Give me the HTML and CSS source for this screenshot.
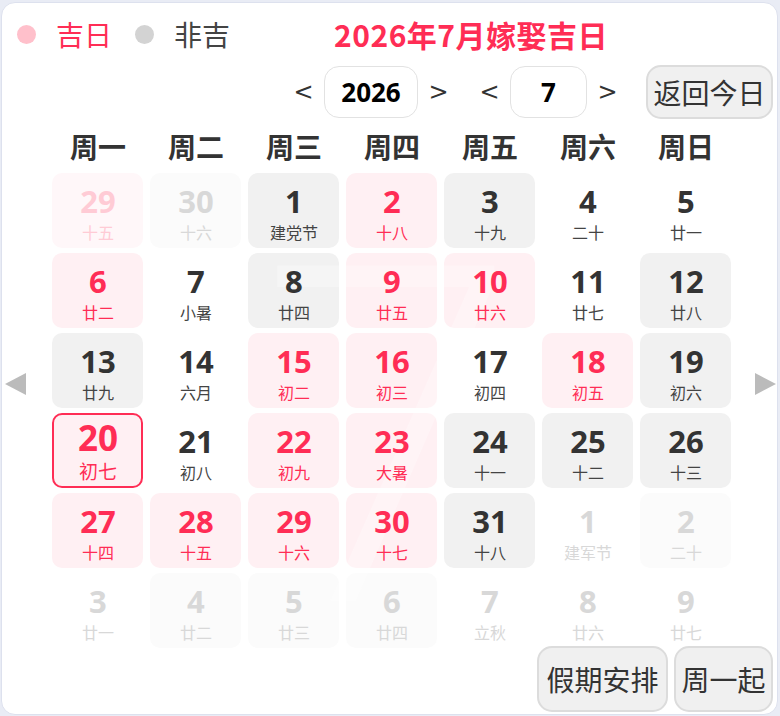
FILE: index.html
```html
<!DOCTYPE html>
<html lang="zh">
<head>
<meta charset="utf-8">
<title>2026年7月嫁娶吉日</title>
<link rel="stylesheet" href="styles.css">
</head>
<body>
<div class="card">
  <div class="top">
    <div class="legend">
      <span class="dot dot-good"></span><span class="lg-text good">吉日</span>
      <span class="dot dot-bad"></span><span class="lg-text bad">非吉</span>
    </div>
    <div class="title">2026年7月嫁娶吉日</div>
  </div>
  <div class="controls">
    <span class="chev">&lt;</span>
    <span class="box box-year">2026</span>
    <span class="chev">&gt;</span>
    <span class="chev chev-gap">&lt;</span>
    <span class="box box-month">7</span>
    <span class="chev">&gt;</span>
    <span class="btn btn-today">返回今日</span>
  </div>
  <div class="main">
    <div class="side"><span class="tri tri-left"></span></div>
    <div class="cal">
      <div class="week">
        <span>周一</span><span>周二</span><span>周三</span><span>周四</span><span>周五</span><span>周六</span><span>周日</span>
      </div>
      <div class="grid">
        <div class="cell pink faded"><b>29</b><i>十五</i></div>
        <div class="cell grey faded"><b>30</b><i>十六</i></div>
        <div class="cell grey"><b>1</b><i>建党节</i></div>
        <div class="cell pink"><b>2</b><i>十八</i></div>
        <div class="cell grey"><b>3</b><i>十九</i></div>
        <div class="cell"><b>4</b><i>二十</i></div>
        <div class="cell"><b>5</b><i>廿一</i></div>

        <div class="cell pink"><b>6</b><i>廿二</i></div>
        <div class="cell"><b>7</b><i>小暑</i></div>
        <div class="cell grey"><b>8</b><i>廿四</i></div>
        <div class="cell pink"><b>9</b><i>廿五</i></div>
        <div class="cell pink"><b>10</b><i>廿六</i></div>
        <div class="cell"><b>11</b><i>廿七</i></div>
        <div class="cell grey"><b>12</b><i>廿八</i></div>

        <div class="cell grey"><b>13</b><i>廿九</i></div>
        <div class="cell"><b>14</b><i>六月</i></div>
        <div class="cell pink"><b>15</b><i>初二</i></div>
        <div class="cell pink"><b>16</b><i>初三</i></div>
        <div class="cell"><b>17</b><i>初四</i></div>
        <div class="cell pink"><b>18</b><i>初五</i></div>
        <div class="cell grey"><b>19</b><i>初六</i></div>

        <div class="cell pink today"><b>20</b><i>初七</i></div>
        <div class="cell"><b>21</b><i>初八</i></div>
        <div class="cell pink"><b>22</b><i>初九</i></div>
        <div class="cell pink"><b>23</b><i>大暑</i></div>
        <div class="cell grey"><b>24</b><i>十一</i></div>
        <div class="cell grey"><b>25</b><i>十二</i></div>
        <div class="cell grey"><b>26</b><i>十三</i></div>

        <div class="cell pink"><b>27</b><i>十四</i></div>
        <div class="cell pink"><b>28</b><i>十五</i></div>
        <div class="cell pink"><b>29</b><i>十六</i></div>
        <div class="cell pink"><b>30</b><i>十七</i></div>
        <div class="cell grey"><b>31</b><i>十八</i></div>
        <div class="cell faded"><b>1</b><i>建军节</i></div>
        <div class="cell grey faded"><b>2</b><i>二十</i></div>

        <div class="cell faded"><b>3</b><i>廿一</i></div>
        <div class="cell grey faded"><b>4</b><i>廿二</i></div>
        <div class="cell grey faded"><b>5</b><i>廿三</i></div>
        <div class="cell grey faded"><b>6</b><i>廿四</i></div>
        <div class="cell faded"><b>7</b><i>立秋</i></div>
        <div class="cell faded"><b>8</b><i>廿六</i></div>
        <div class="cell faded"><b>9</b><i>廿七</i></div>
      </div>
    </div>
    <div class="side"><span class="tri tri-right"></span></div>
  </div>
  <div class="footer">
    <span class="btn btn-holiday">假期安排</span>
    <span class="btn btn-week">周一起</span>
  </div>
</div>
</body>
</html>
```

FILE: styles.css
```css
html, body {
  margin: 0;
  padding: 0;
}
body {
  background: #e9ecf5;
  font-family: "Noto Sans CJK SC", "Noto Sans", sans-serif;
  width: 780px;
  height: 716px;
  overflow: hidden;
}
.card {
  box-sizing: border-box;
  width: 777px;
  height: 713px;
  margin: 2px 0 0 1px;
  background: #fff;
  border: 1px solid #dde1ee;
  border-radius: 14px;
  position: relative;
  overflow: hidden;
}
.top {
  display: flex;
  align-items: center;
  height: 62px;
  padding-left: 15px;
}
.legend {
  display: flex;
  align-items: center;
}
.dot {
  width: 19px;
  height: 19px;
  border-radius: 50%;
  display: inline-block;
}
.dot-good { background: #ffc0cb; }
.dot-bad { background: #d3d3d3; margin-left: 23px; }
.lg-text {
  font-size: 28px;
  line-height: 40px;
  margin-left: 20px;
}
.good { color: #ff2d55; }
.bad { color: #444; }
.title {
  margin-left: 104px;
  font-size: 30px;
  font-weight: 700;
  letter-spacing: 0.5px;
  color: #ff2d55;
  line-height: 40px;
}
.controls {
  display: flex;
  justify-content: flex-end;
  align-items: center;
  height: 54px;
  padding-right: 4px;
}
.chev {
  font-family: "DejaVu Sans", sans-serif;
  font-size: 24px;
  color: #333;
  width: 41px;
  text-align: center;
}
.chev-gap { margin-left: 10px; }
.box {
  box-sizing: border-box;
  height: 52px;
  border: 1px solid #e2e2e2;
  border-radius: 15px;
  display: flex;
  align-items: center;
  justify-content: center;
  font-family: "Open Sans", sans-serif;
  font-weight: 700;
  font-size: 26px;
  color: #000;
}
.box-year { width: 94px; }
.box-month { width: 77px; }
.btn {
  box-sizing: border-box;
  background: #f0f0f0;
  border: 2px solid #dcdcdc;
  border-radius: 15px;
  display: flex;
  align-items: center;
  justify-content: center;
  font-size: 28px;
  color: #333;
}
.btn-today {
  width: 127px;
  height: 54px;
  margin-left: 18px;
}
.main {
  display: flex;
  align-items: center;
}
.side {
  width: 50px;
  display: flex;
  align-items: center;
  justify-content: center;
}
.side:first-child { justify-content: flex-start; padding-left: 3px; width: 47px; }
.side:last-child { justify-content: flex-end; padding-right: 1px; width: 45px; }
.tri {
  width: 0;
  height: 0;
  border-top: 11px solid transparent;
  border-bottom: 11px solid transparent;
}
.tri-left { border-right: 21px solid #bbbbbb; }
.tri-right { border-left: 21px solid #bbbbbb; }
.cal {
  position: relative;
  width: 679px;
  margin-left: 1px;
}
.cal::before {
  content: "7";
  position: absolute;
  left: 200px;
  top: 50px;
  font-family: "Open Sans", sans-serif;
  font-weight: 300;
  font-size: 470px;
  line-height: 500px;
  color: rgba(255, 255, 255, 0.3);
  pointer-events: none;
  z-index: 1;
}
.week {
  display: grid;
  grid-template-columns: repeat(7, 91px);
  column-gap: 7px;
  height: 54px;
  align-items: center;
}
.week span {
  text-align: center;
  font-size: 28px;
  font-weight: 700;
  color: #333;
  line-height: 38px;
}
.grid {
  display: grid;
  grid-template-columns: repeat(7, 91px);
  grid-auto-rows: 75px;
  column-gap: 7px;
  row-gap: 5px;
}
.cell {
  box-sizing: border-box;
  border-radius: 10px;
  display: flex;
  flex-direction: column;
  align-items: center;
  color: #333;
}
.cell b, .cell i {
  position: relative;
  z-index: 2;
}
.cell b {
  font-family: "Open Sans", sans-serif;
  font-weight: 700;
  font-size: 31px;
  line-height: 38px;
  margin-top: 9px;
}
.cell i {
  font-style: normal;
  font-size: 16px;
  line-height: 22px;
  color: #444;
  margin-top: 1px;
}
.cell.grey { background: #f1f1f1; }
.cell.pink { background: #fff0f3; }
.cell.pink b, .cell.pink i { color: #ff2d55; }
.cell.faded b, .cell.faded i { color: #d8d8d8; }
.cell.grey.faded { background: #fbfbfb; }
.cell.pink.faded { background: #fff7f9; }
.cell.pink.faded b, .cell.pink.faded i { color: #ffcbd5; }
.cell.today {
  border: 2px solid #ff2d55;
}
.cell.today b {
  font-size: 35px;
  line-height: 34px;
  margin-top: 6px;
}
.cell.today i {
  font-size: 19px;
  line-height: 18px;
  margin-top: 7px;
}
.footer {
  display: flex;
  justify-content: flex-end;
  gap: 6px;
  padding-right: 4px;
  margin-top: -2px;
}
.btn-holiday { width: 131px; height: 66px; }
.btn-week { width: 99px; height: 66px; }
```
